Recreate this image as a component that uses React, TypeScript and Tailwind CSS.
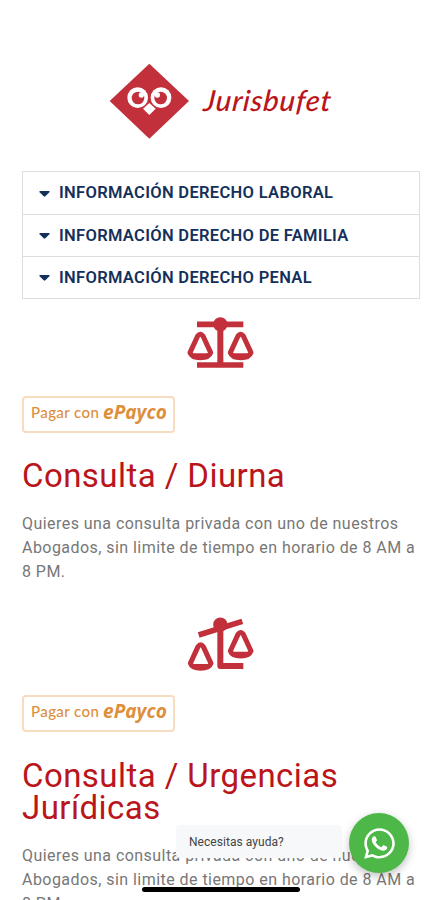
import { FaWhatsapp } from "react-icons/fa";

const robo = "font-[Roboto,sans-serif]";

function Owl() {
  return (
    <svg className="h-[76px] w-[80px] shrink-0" viewBox="27 23 240 228">
      <path d="M148 25 267 137 148 250 29 137Z" fill="#c2303b" />
      <g fill="#fff">
        <circle cx="113" cy="127" r="31" />
        <circle cx="183" cy="127" r="31" />
        <path d="M148 143 167 160 148 179 129 160Z" />
      </g>
      <g fill="#c2303b">
        <circle cx="114" cy="128" r="19" />
        <circle cx="182" cy="128" r="19" />
      </g>
      <g fill="#fff">
        <circle cx="124" cy="119" r="8" />
        <circle cx="172" cy="119" r="8" />
      </g>
    </svg>
  );
}

function Pan({ x, y }: { x: number; y: number }) {
  return (
    <g transform={`translate(${x} ${y})`}>
      <path
        d="M-31 60 L-8 10 Q0 -1 8 10 L31 60 Q26 75 0 75 Q-26 75 -31 60Z"
        fill="none"
        stroke="#c2303b"
        strokeWidth="15"
        strokeLinejoin="round"
      />
      <path d="M-30 62H30Q24 78 0 78Q-24 78 -30 62Z" fill="#c2303b" stroke="none" />
    </g>
  );
}

function Scale({ tilted }: { tilted?: boolean }) {
  return (
    <svg
      className="h-[65px] w-[80px]"
      viewBox="0 0 240 195"
      fill="none"
      stroke="#c2303b"
      strokeWidth="17"
      strokeLinejoin="round"
    >
      {tilted ? (
        <>
          <path d="M56 78 187 37" />
          <circle cx="121" cy="47" r="13" fill="#c2303b" />
          <path d="M121 50V171H190" strokeWidth="18" />
          <Pan x={62} y={103} />
          <Pan x={182} y={66} />
        </>
      ) : (
        <>
          <path d="M51 43H190M51 165H190" />
          <path d="M121 42V163" strokeWidth="18" />
          <circle cx="121" cy="43" r="13" fill="#c2303b" />
          <Pan x={61} y={68} />
          <Pan x={182} y={68} />
        </>
      )}
    </svg>
  );
}

function PayButton() {
  return (
    <button className="flex h-[37px] w-[153px] shrink-0 items-center rounded-[4px] border-2 border-[#f8dcc0] bg-white pb-[5px] pl-[7px] text-[#dd8f3c]">
      <span className="w-[72px] whitespace-nowrap text-left font-[Lato,sans-serif] text-[15px] font-medium tracking-[0.4px]">Pagar con</span>
      <span className="whitespace-nowrap font-['Open_Sans',sans-serif] text-[19px] font-bold italic leading-6 tracking-[0.05px]">
        ePayco
      </span>
    </button>
  );
}

function Service({ title, tilted }: { title: string; tilted?: boolean }) {
  return (
    <section className={`flex flex-col items-start ${tilted ? "" : "h-[299px]"}`}>
      <div className="flex h-[86px] w-full shrink-0 justify-center">
        <Scale tilted={tilted} />
      </div>
      <PayButton />
      <h2
        className={`w-[380px] shrink-0 text-[33px] leading-8 tracking-[0.44px] text-[#b9151b] ${tilted ? "mt-7" : "mt-[27px]"}`}
      >
        {title}
      </h2>
      <p className="mt-5 w-[400px] shrink-0 whitespace-nowrap text-[16px] leading-6 tracking-[0.45px] text-[#777]">
        Quieres una consulta privada con uno de nuestros
        <br />
        Abogados, sin limite de tiempo en horario de 8 AM a
        <br />8 PM.
      </p>
    </section>
  );
}

export default function App() {
  const items = ["INFORMACIÓN DERECHO LABORAL", "INFORMACIÓN DERECHO DE FAMILIA", "INFORMACIÓN DERECHO PENAL"];
  return (
    <div className={`relative h-[900px] w-[439px] overflow-hidden bg-white ${robo}`}>
      <header className="flex h-[171px] items-start pl-[109px] pt-[63px]">
        <Owl />
        <span className="ml-[15px] mt-[17px] -skew-x-6 font-[Lato,sans-serif] text-[29px] font-medium italic leading-10 tracking-[0.9px] text-[#b9151b]">
          Jurisbufet
        </span>
      </header>
      <ul className="ml-[22px] w-[398px] border border-[#dcdedf] text-[#14305a]">
        {items.map((t, i) => (
          <li key={t} className={`flex h-[42px] items-center pl-4 pt-px ${i ? "border-t border-[#dcdedf]" : ""}`}>
            <svg className="h-[6px] w-[11px]" viewBox="0 0 11 6">
              <path d="M1.2 0H9.8Q11.3 .3 10.2 1.5L6.3 5.3Q5.5 6 4.7 5.3L.8 1.5Q-.3 .3 1.2 0Z" fill="#14305a" />
            </svg>
            <span className="ml-[9px] whitespace-nowrap text-[16.5px] font-semibold tracking-[0.32px]">{t}</span>
          </li>
        ))}
      </ul>
      <main className="pl-[22px] pr-[21px] pt-[11px]">
        <Service title="Consulta / Diurna" />
        <Service title="Consulta / Urgencias Jurídicas" tilted />
      </main>
      <div className="absolute left-[176px] top-[825px] flex h-[33px] w-[166px] items-center rounded-[4px] bg-[#f6f8fa] pl-[13px] text-[12px] tracking-[0.05px] text-[#444]">
        Necesitas ayuda?
      </div>
      <div className="absolute left-[349px] top-[813px] flex size-[60px] items-center justify-center rounded-full bg-[#4db848] text-white shadow-[0_3px_8px_rgba(0,0,0,0.25)]">
        <FaWhatsapp size={35} />
      </div>
      <div className="absolute left-[142px] top-[887px] h-[5px] w-[158px] rounded-full bg-black" />
    </div>
  );
}
